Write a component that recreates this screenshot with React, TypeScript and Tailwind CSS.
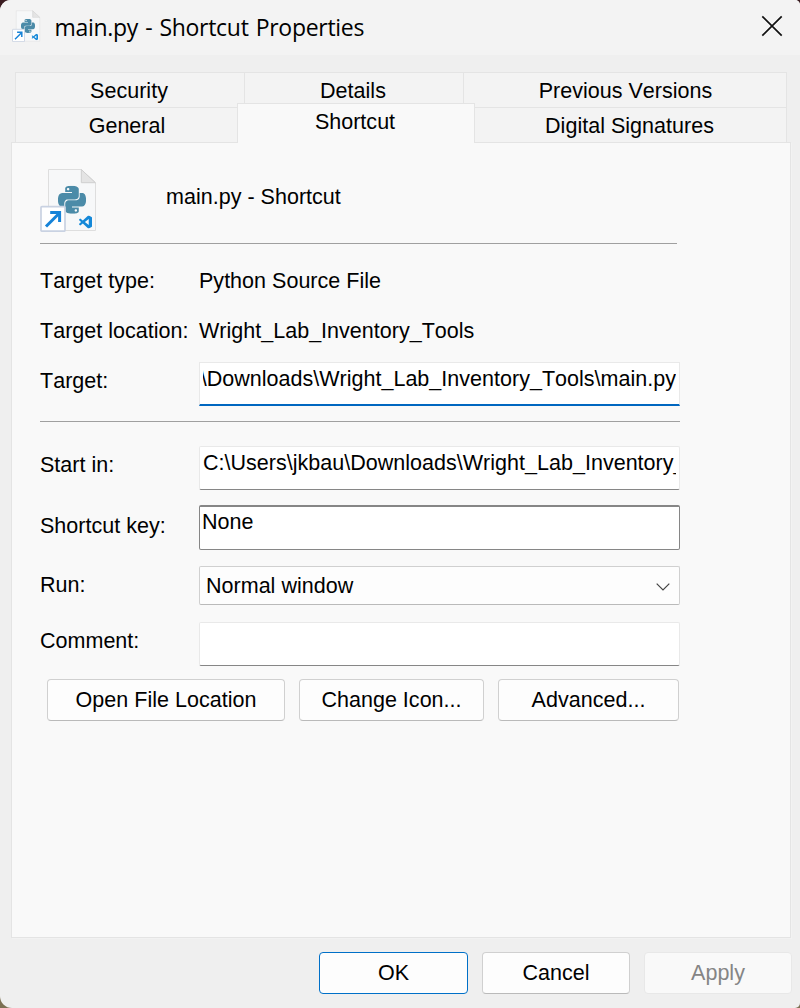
import type { ReactNode } from "react";
import { SiPython } from "react-icons/si";

function ShortcutIcon({ className }: { className: string }) {
  return (
    <svg viewBox="0 0 57 64" className={className} fill="none">
      <path d="M8.5 1.5H41L55.5 14.5V62.5H8.5Z" fill="#f7f8f9" stroke="#dedede" />
      <path d="M41.3 1.5L55.3 14.7H41.3Z" fill="#e4e4e4" stroke="#cfcfcf" />
      <SiPython x={18} y={17.8} size={28} color="#4b8ba8" />
      <rect x="1" y="38.6" width="24" height="24.6" rx="1" fill="#fff" stroke="#c9d2e2" strokeWidth="1.7" />
      <path d="M6 58.5L19 45.5" stroke="#1683d8" strokeWidth="3" />
      <path d="M10.2 44.4H19.6V54" stroke="#1683d8" strokeWidth="3" />
      <svg x="39" y="47.5" width="13" height="13" viewBox="0 0 24 24">
        <path
          fill="#1488d8"
          d="M23.15 2.587L18.21.21a1.494 1.494 0 0 0-1.705.29l-9.46 8.63-4.12-3.128a.999.999 0 0 0-1.276.057L.327 7.261A1 1 0 0 0 .326 8.74L3.899 12 .326 15.26a1 1 0 0 0 .001 1.479L1.65 17.94a.999.999 0 0 0 1.276.057l4.12-3.128 9.46 8.63a1.492 1.492 0 0 0 1.704.29l4.942-2.377A1.5 1.5 0 0 0 24 20.06V3.939a1.5 1.5 0 0 0-.85-1.352zm-5.146 14.861L10.826 12l7.178-5.448v10.896z"
        />
      </svg>
    </svg>
  );
}

function Row({ label, className, labelClass, children }: { label: string; className: string; labelClass: string; children: ReactNode }) {
  return (
    <div className={`grid grid-cols-[159px_481px] ${className}`}>
      <span className={labelClass}>{label}</span>
      {children}
    </div>
  );
}

function Button({ className, children }: { className: string; children: ReactNode }) {
  return (
    <button className={`flex h-[42px] items-center justify-center rounded-[4px] border ${className}`}>{children}</button>
  );
}

const plain = "border-[#d0d0d0] border-b-[#bababa] bg-[#fdfdfd]";
const field = "h-[44px] overflow-hidden border border-[#e9e9e9] border-b-[#868686] rounded-[2px] bg-white px-[3px] pt-[4px]";

export default function App() {
  return (
    <div className="h-[1008px] w-[800px] bg-linear-to-b from-[#3a1c20] to-[#7c7053]">
      <div className="flex h-full flex-col overflow-hidden rounded-tl-[11px] rounded-tr-[5px] rounded-br-[5px] rounded-bl-[12px] bg-[#efefef] font-['Liberation_Sans',Arial,sans-serif] text-[21.5px] leading-[24px] tracking-[0.02px] whitespace-nowrap text-black [font-kerning:none]">
        <header className="flex h-[55px] shrink-0 items-start bg-[#f3f3f3] pt-[10px] pl-[12px]">
          <ShortcutIcon className="h-[32px] w-[28.5px]" />
          <h1 className="mt-px ml-[14px] font-['Open_Sans','Noto_Sans',sans-serif] text-[23px] leading-[32px] tracking-[-0.3px] [word-spacing:1.5px]">
            main.py - Shortcut Properties
          </h1>
          <svg viewBox="0 0 22 22" className="mt-[5px] mr-[17px] ml-auto size-[22px]" stroke="#111" strokeWidth="1.7">
            <path d="M1.3 1.3L20.7 20.7M20.7 1.3L1.3 20.7" />
          </svg>
        </header>

        <nav className="mt-[17px] ml-[15px] flex w-[772px] shrink-0 flex-col">
          <div className="flex h-[35px] border border-b-0 border-[#e4e4e4] bg-[#f3f3f3] pt-[6px] text-center">
            <span className="-mt-[6px] w-[229px] border-r border-[#e4e4e4] pt-[6px] pr-[2px]">Security</span>
            <span className="-mt-[6px] w-[219px] border-r border-[#e4e4e4] pt-[6px] pr-[2px]">Details</span>
            <span className="flex-1 pl-px">Previous Versions</span>
          </div>
          <div className="flex h-[35px] items-end text-center">
            <span className="h-[35px] w-[222px] border-t border-l border-[#e4e4e4] bg-[#f3f3f3] pt-[6px] pl-px">General</span>
            <span className="z-10 -mb-px h-[40px] w-[238px] border border-b-0 border-[#e4e4e4] bg-[#f9f9f9] pt-[6px] pr-[2px]">Shortcut</span>
            <span className="h-[35px] flex-1 border-t border-r border-[#e4e4e4] bg-[#f3f3f3] pt-[6px] pr-[2px]">Digital Signatures</span>
          </div>
        </nav>

        <main className="ml-[11px] h-[796px] w-[780px] shrink-0 border border-[#e4e4e4] bg-[#f9f9f9] pt-[25px] pl-[28px] shadow-[1px_1px_0_#f2f2f2]">
          <div className="flex h-[75px]">
            <ShortcutIcon className="h-[64px] w-[57px]" />
            <span className="mt-[17px] ml-[69px]">main.py - Shortcut</span>
          </div>
          <div className="h-px w-[637px] bg-[#a0a0a0]" />
          <Row label="Target type:" className="mt-[25px]" labelClass="">
            <span>Python Source File</span>
          </Row>
          <Row label="Target location:" className="mt-[26px]" labelClass="">
            <span>Wright_Lab_Inventory_Tools</span>
          </Row>
          <Row label="Target:" className="mt-[19px]" labelClass="mt-[7px]">
            <div className="h-[44px] border border-b-2 border-[#e9e9e9] border-b-[#0067c0] bg-white px-[3px] pt-[4px]">
              <div className="flex justify-end overflow-hidden">
                <span>\Downloads\Wright_Lab_Inventory_Tools\main.py</span>
              </div>
            </div>
          </Row>
          <div className="mt-[15px] h-px w-[640px] bg-[#a0a0a0]" />
          <Row label="Start in:" className="mt-[24px]" labelClass="mt-[7px]">
            <div className={field}>
              <div className="overflow-hidden">C:\Users\jkbau\Downloads\Wright_Lab_Inventory_Tools</div>
            </div>
          </Row>
          <Row label="Shortcut key:" className="mt-[15px]" labelClass="mt-[9px]">
            <div className="h-[45px] rounded-[2px] border border-t-2 border-[#868686] bg-white pt-[3px] pl-[2px]">None</div>
          </Row>
          <Row label="Run:" className="mt-[16px]" labelClass="mt-[7px]">
            <div className="flex h-[39px] justify-between rounded-[2px] border border-[#d0d0d0] border-b-[#bababa] bg-[#fdfdfd] pt-[7px] pr-[9px] pl-[6px]">
              <span>Normal window</span>
              <svg viewBox="0 0 14 8" className="mt-[9px] h-[8px] w-[14px]" fill="none" stroke="#444" strokeWidth="1.2">
                <path d="M0.7 0.7L7 7L13.3 0.7" />
              </svg>
            </div>
          </Row>
          <Row label="Comment:" className="mt-[17px]" labelClass="mt-[7px]">
            <div className={field} />
          </Row>
          <div className="mt-[13px] ml-[7px] flex gap-[14px]">
            <Button className={`w-[238px] ${plain}`}>Open File Location</Button>
            <Button className={`w-[185px] ${plain}`}>Change Icon...</Button>
            <Button className={`w-[181px] ${plain}`}>Advanced...</Button>
          </div>
        </main>

        <footer className="mt-[14px] ml-[319px] flex gap-[14px]">
          <Button className="w-[149px] border-[#0070c8] bg-[#fdfdfd]">OK</Button>
          <Button className={`w-[148px] ${plain}`}>Cancel</Button>
          <Button className="w-[148px] border-[#e8e8e8] bg-[#f9f9f9] text-[#858585]">Apply</Button>
        </footer>
      </div>
    </div>
  );
}
